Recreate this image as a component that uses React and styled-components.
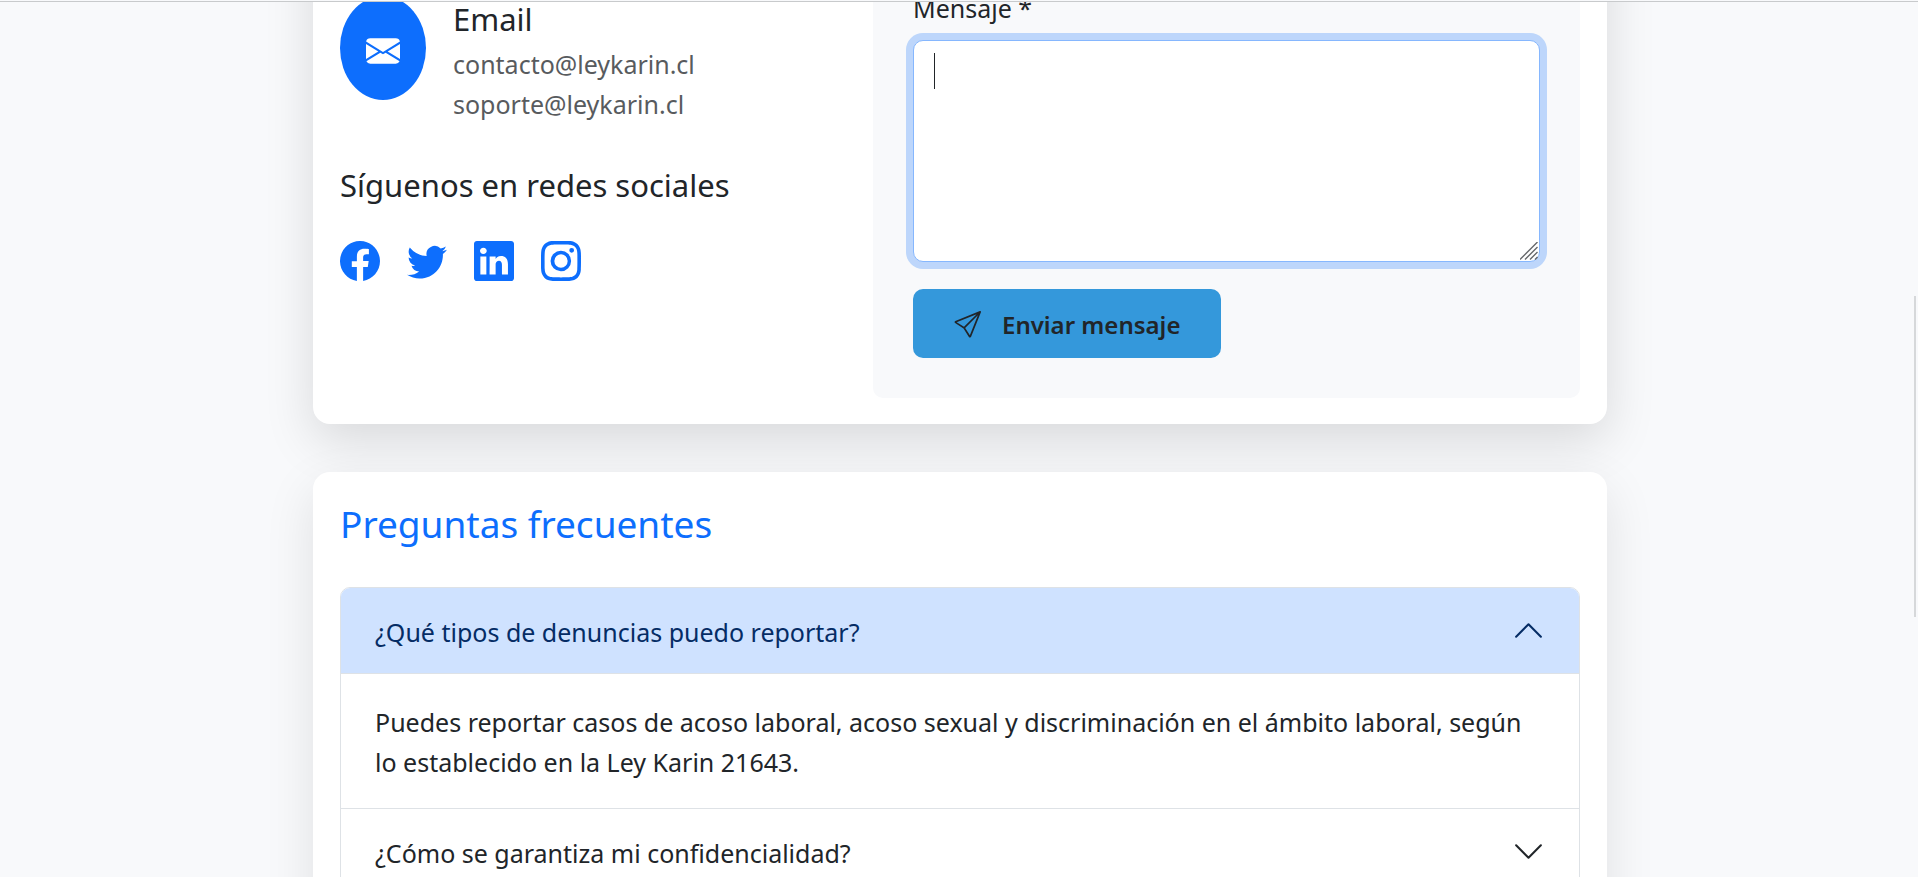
import React, { useState } from "react";
import styled, { createGlobalStyle } from "styled-components";
import {
  BsEnvelopeFill,
  BsFacebook,
  BsInstagram,
  BsLinkedin,
  BsSend,
  BsTwitter,
} from "react-icons/bs";

const GlobalStyle = createGlobalStyle`
  *, *::before, *::after { box-sizing: border-box; }
  body {
    margin: 0;
    background: #f8f9fb;
    color: #212529;
    font-family: "Segoe UI", "Noto Sans", "Open Sans", sans-serif;
    font-size: 25px;
    line-height: 40px;
  }
  h2, h3, p { margin: 0; font-weight: 400; }
`;

const Viewport = styled.div`
  position: relative;
  height: 100vh;
  padding-left: 2px;
  overflow: hidden;
`;

const HeaderEdge = styled.header`
  position: absolute;
  inset: 0 0 auto;
  height: 2px;
  background: #f8f9fb;
  border-bottom: 1px solid #c8cacc;
`;

const ScrollThumb = styled.div`
  position: absolute;
  top: 296px;
  right: 2px;
  width: 2px;
  height: 321px;
  background: #d6d8da;
`;

const Page = styled.main`
  display: flex;
  flex-direction: column;
  gap: 48px;
  max-width: 1294px;
  margin: -78px auto 0;
`;

const Card = styled.section`
  padding: 26px 27px;
  background: #fff;
  border-radius: 17px;
  box-shadow: 0 17px 50px rgba(0, 0, 0, ${(p) => (p.$raised ? 0.13 : 0.1)});
`;

const Columns = styled.div`
  display: grid;
  grid-template-columns: 5fr 7fr;
  gap: 28px;
`;

const ContactColumn = styled.div`
  padding-top: 48px;
`;

const ContactItem = styled.div`
  display: flex;
  align-items: flex-start;
  gap: 27px;
  margin-bottom: 41px;
`;

const ContactBadge = styled.span`
  display: flex;
  flex: none;
  align-items: center;
  justify-content: center;
  width: 86px;
  height: 104px;
  padding-top: 5px;
  border-radius: 50%;
  background: #0d6efd;
  color: #fff;
  font-size: 34px;
`;

const ContactText = styled.div`
  padding-top: 3px;
`;

const Subheading = styled.h3`
  margin-bottom: ${(p) => (p.$tight ? 5 : 36)}px;
  font-size: 31px;
  line-height: 40px;
`;

const Muted = styled.p`
  color: #585b5e;
`;

const SocialLinks = styled.nav`
  display: flex;
  gap: 27px;
`;

const SocialLink = styled.a`
  display: flex;
  color: #0d6efd;
  font-size: 40px;
`;

const FormPanel = styled.form`
  padding: 40px;
  border-radius: 10px;
  background: #f8f9fb;
`;

const Label = styled.label`
  display: block;
  margin-bottom: 12px;
`;

const FieldFrame = styled.div`
  position: relative;
  margin-bottom: 27px;
`;

const MessageField = styled.textarea`
  display: block;
  width: 100%;
  height: 222px;
  padding: 10px 20px;
  border: 1px solid #ced4da;
  border-radius: 10px;
  outline: 0;
  background: #fff;
  color: inherit;
  font: inherit;
  caret-color: transparent;
  resize: vertical;

  &::-webkit-resizer { display: none; }

  &:focus {
    border-color: #86b7fe;
    box-shadow: 0 0 0 7px rgba(13, 110, 253, 0.25);
  }
`;

const Caret = styled.span`
  position: absolute;
  top: 13px;
  left: 21px;
  width: 1px;
  height: 36px;
  background: #212529;
  pointer-events: none;
`;

const ResizeGrip = styled.svg`
  position: absolute;
  right: 2px;
  bottom: 2px;
  width: 18px;
  height: 18px;
  pointer-events: none;
`;

const SubmitButton = styled.button`
  display: inline-flex;
  align-items: center;
  gap: 21px;
  height: 69px;
  padding: 2px 41px 0;
  border: 0;
  border-radius: 10px;
  background: #3498db;
  color: #212529;
  font: inherit;
  font-size: 24px;
  font-weight: 600;

  svg { width: 27px; height: 27px; }
`;

const SectionTitle = styled.h2`
  margin-bottom: 37px;
  color: #0d6efd;
  font-size: 37px;
  line-height: 52px;
`;

const Accordion = styled.div`
  overflow: hidden;
  border: 1px solid #dee2e6;
  border-radius: 10px;
`;

const AccordionItem = styled.div`
  & + & { border-top: 1px solid #dee2e6; }
`;

const AccordionToggle = styled.button`
  display: flex;
  align-items: flex-start;
  justify-content: space-between;
  width: 100%;
  height: 86px;
  padding: 24px 34px 0;
  border: 0;
  background: ${(p) => (p.$open ? "#cfe2ff" : "#fff")};
  box-shadow: ${(p) => (p.$open ? "inset 0 -1px 0 #dee2e6" : "none")};
  color: ${(p) => (p.$open ? "#052c65" : "#212529")};
  font: inherit;
  text-align: left;
`;

const Chevron = styled.svg`
  flex: none;
  width: 33px;
  height: 33px;
  margin-top: 2px;
  transform: ${(p) => (p.$open ? "rotate(180deg)" : "none")};
`;

const AccordionBody = styled.div`
  padding: 28px 34px 26px;
`;

const socials = [
  { name: "Facebook", Icon: BsFacebook },
  { name: "Twitter", Icon: BsTwitter },
  { name: "LinkedIn", Icon: BsLinkedin },
  { name: "Instagram", Icon: BsInstagram },
];

const faqs = [
  {
    question: "¿Qué tipos de denuncias puedo reportar?",
    answer:
      "Puedes reportar casos de acoso laboral, acoso sexual y discriminación en el ámbito laboral, según lo establecido en la Ley Karin 21643.",
  },
  { question: "¿Cómo se garantiza mi confidencialidad?", answer: "" },
];

function FaqItem({ question, answer, open, onToggle }) {
  return (
    <AccordionItem>
      <AccordionToggle type="button" $open={open} aria-expanded={open} onClick={onToggle}>
        {question}
        <Chevron $open={open} viewBox="0 0 16 16" fill="none" stroke="currentColor" strokeLinecap="round" strokeLinejoin="round" aria-hidden="true">
          <path d="m2 5 6 6 6-6" />
        </Chevron>
      </AccordionToggle>
      {open && answer && <AccordionBody>{answer}</AccordionBody>}
    </AccordionItem>
  );
}

export default function App() {
  const [openIndex, setOpenIndex] = useState(0);
  const [message, setMessage] = useState("");

  return (
    <Viewport>
      <GlobalStyle />
      <Page>
        <Card $raised>
          <Columns>
            <ContactColumn>
              <ContactItem>
                <ContactBadge><BsEnvelopeFill /></ContactBadge>
                <ContactText>
                  <Subheading $tight>Email</Subheading>
                  <Muted>contacto@leykarin.cl</Muted>
                  <Muted>soporte@leykarin.cl</Muted>
                </ContactText>
              </ContactItem>
              <Subheading>Síguenos en redes sociales</Subheading>
              <SocialLinks>
                {socials.map(({ name, Icon }) => (
                  <SocialLink key={name} href="#" aria-label={name}><Icon /></SocialLink>
                ))}
              </SocialLinks>
            </ContactColumn>
            <FormPanel onSubmit={(e) => e.preventDefault()}>
              <Label htmlFor="mensaje">Mensaje *</Label>
              <FieldFrame>
                <MessageField
                  id="mensaje"
                  autoFocus
                  required
                  value={message}
                  onChange={(e) => setMessage(e.target.value)}
                />
                {message === "" && <Caret />}
                <ResizeGrip viewBox="0 0 18 18" stroke="#66686b" strokeWidth="1.4" aria-hidden="true">
                  <path d="M0 17.5 17.5 0M5 17.5 17.5 5M10 17.5 17.5 10M15 17.5 17.5 15" />
                </ResizeGrip>
              </FieldFrame>
              <SubmitButton type="submit"><BsSend />Enviar mensaje</SubmitButton>
            </FormPanel>
          </Columns>
        </Card>
        <Card>
          <SectionTitle>Preguntas frecuentes</SectionTitle>
          <Accordion>
            {faqs.map((faq, i) => (
              <FaqItem
                key={faq.question}
                {...faq}
                open={openIndex === i}
                onToggle={() => setOpenIndex(openIndex === i ? -1 : i)}
              />
            ))}
          </Accordion>
        </Card>
      </Page>
      <HeaderEdge />
      <ScrollThumb />
    </Viewport>
  );
}
